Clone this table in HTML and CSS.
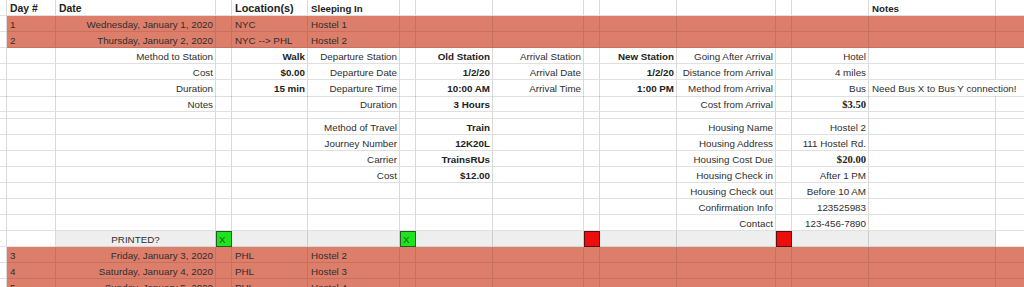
FILE: index.html
```html
<!DOCTYPE html>
<html lang="en">
<head>
<meta charset="utf-8">
<title>Trip itinerary</title>
<link rel="stylesheet" href="styles.css">
</head>
<body>
<div class="sheet">
  <div class="row hd">
    <div class="c"></div><div class="c">Day #</div><div class="c">Date</div><div class="c"></div><div class="c loc">Location(s)</div><div class="c sm">Sleeping In</div><div class="c"></div><div class="c"></div><div class="c"></div><div class="c"></div><div class="c"></div><div class="c"></div><div class="c"></div><div class="c"></div><div class="c sm">Notes</div><div class="c"></div>
  </div>
  <div class="row day">
    <div class="c a"></div><div class="c">1</div><div class="c r">Wednesday, January 1, 2020</div><div class="c"></div><div class="c">NYC</div><div class="c">Hostel 1</div><div class="c"></div><div class="c"></div><div class="c"></div><div class="c"></div><div class="c"></div><div class="c"></div><div class="c"></div><div class="c"></div><div class="c"></div><div class="c"></div>
  </div>
  <div class="row day">
    <div class="c a"></div><div class="c">2</div><div class="c r">Thursday, January 2, 2020</div><div class="c"></div><div class="c">NYC --&gt; PHL</div><div class="c">Hostel 2</div><div class="c"></div><div class="c"></div><div class="c"></div><div class="c"></div><div class="c"></div><div class="c"></div><div class="c"></div><div class="c"></div><div class="c"></div><div class="c"></div>
  </div>
  <div class="row">
    <div class="c"></div><div class="c"></div><div class="c r">Method to Station</div><div class="c"></div><div class="c r b">Walk</div><div class="c r">Departure Station</div><div class="c"></div><div class="c r b">Old Station</div><div class="c r">Arrival Station</div><div class="c"></div><div class="c r b">New Station</div><div class="c r">Going After Arrival</div><div class="c"></div><div class="c r">Hotel</div><div class="c"></div><div class="c"></div>
  </div>
  <div class="row">
    <div class="c"></div><div class="c"></div><div class="c r">Cost</div><div class="c"></div><div class="c r b">$0.00</div><div class="c r">Departure Date</div><div class="c"></div><div class="c r b">1/2/20</div><div class="c r">Arrival Date</div><div class="c"></div><div class="c r b">1/2/20</div><div class="c r">Distance from Arrival</div><div class="c"></div><div class="c r">4 miles</div><div class="c"></div><div class="c"></div>
  </div>
  <div class="row">
    <div class="c"></div><div class="c"></div><div class="c r">Duration</div><div class="c"></div><div class="c r b">15 min</div><div class="c r">Departure Time</div><div class="c"></div><div class="c r b">10:00 AM</div><div class="c r">Arrival Time</div><div class="c"></div><div class="c r b">1:00 PM</div><div class="c r">Method from Arrival</div><div class="c"></div><div class="c r">Bus</div><div class="c spill">Need Bus X to Bus Y connection!</div><div class="c"></div>
  </div>
  <div class="row">
    <div class="c"></div><div class="c"></div><div class="c r">Notes</div><div class="c"></div><div class="c"></div><div class="c r">Duration</div><div class="c"></div><div class="c r b">3 Hours</div><div class="c"></div><div class="c"></div><div class="c"></div><div class="c r">Cost from Arrival</div><div class="c"></div><div class="c r b serif">$3.50</div><div class="c"></div><div class="c"></div>
  </div>
  <div class="row gap">
    <div class="c"></div><div class="c"></div><div class="c"></div><div class="c"></div><div class="c"></div><div class="c"></div><div class="c"></div><div class="c"></div><div class="c"></div><div class="c"></div><div class="c"></div><div class="c"></div><div class="c"></div><div class="c"></div><div class="c"></div><div class="c"></div>
  </div>
  <div class="row">
    <div class="c"></div><div class="c"></div><div class="c"></div><div class="c"></div><div class="c"></div><div class="c r">Method of Travel</div><div class="c"></div><div class="c r b">Train</div><div class="c"></div><div class="c"></div><div class="c"></div><div class="c r">Housing Name</div><div class="c"></div><div class="c r">Hostel 2</div><div class="c"></div><div class="c"></div>
  </div>
  <div class="row">
    <div class="c"></div><div class="c"></div><div class="c"></div><div class="c"></div><div class="c"></div><div class="c r">Journey Number</div><div class="c"></div><div class="c r b">12K20L</div><div class="c"></div><div class="c"></div><div class="c"></div><div class="c r">Housing Address</div><div class="c"></div><div class="c r">111 Hostel Rd.</div><div class="c"></div><div class="c"></div>
  </div>
  <div class="row">
    <div class="c"></div><div class="c"></div><div class="c"></div><div class="c"></div><div class="c"></div><div class="c r">Carrier</div><div class="c"></div><div class="c r b">TrainsRUs</div><div class="c"></div><div class="c"></div><div class="c"></div><div class="c r">Housing Cost Due</div><div class="c"></div><div class="c r b serif">$20.00</div><div class="c"></div><div class="c"></div>
  </div>
  <div class="row">
    <div class="c"></div><div class="c"></div><div class="c"></div><div class="c"></div><div class="c"></div><div class="c r">Cost</div><div class="c"></div><div class="c r b">$12.00</div><div class="c"></div><div class="c"></div><div class="c"></div><div class="c r">Housing Check in</div><div class="c"></div><div class="c r">After 1 PM</div><div class="c"></div><div class="c"></div>
  </div>
  <div class="row">
    <div class="c"></div><div class="c"></div><div class="c"></div><div class="c"></div><div class="c"></div><div class="c"></div><div class="c"></div><div class="c"></div><div class="c"></div><div class="c"></div><div class="c"></div><div class="c r">Housing Check out</div><div class="c"></div><div class="c r">Before 10 AM</div><div class="c"></div><div class="c"></div>
  </div>
  <div class="row">
    <div class="c"></div><div class="c"></div><div class="c"></div><div class="c"></div><div class="c"></div><div class="c"></div><div class="c"></div><div class="c"></div><div class="c"></div><div class="c"></div><div class="c"></div><div class="c r">Confirmation Info</div><div class="c"></div><div class="c r">123525983</div><div class="c"></div><div class="c"></div>
  </div>
  <div class="row">
    <div class="c"></div><div class="c"></div><div class="c"></div><div class="c"></div><div class="c"></div><div class="c"></div><div class="c"></div><div class="c"></div><div class="c"></div><div class="c"></div><div class="c"></div><div class="c r">Contact</div><div class="c"></div><div class="c r">123-456-7890</div><div class="c"></div><div class="c"></div>
  </div>
  <div class="row printed">
    <div class="c"></div><div class="c"></div><div class="c g ctr">PRINTED?</div><div class="c ok">X</div><div class="c g"></div><div class="c g"></div><div class="c ok">X</div><div class="c g"></div><div class="c g"></div><div class="c no"></div><div class="c g"></div><div class="c g"></div><div class="c no"></div><div class="c g"></div><div class="c g"></div><div class="c"></div>
  </div>
  <div class="row day">
    <div class="c a"></div><div class="c">3</div><div class="c r">Friday, January 3, 2020</div><div class="c"></div><div class="c">PHL</div><div class="c">Hostel 2</div><div class="c"></div><div class="c"></div><div class="c"></div><div class="c"></div><div class="c"></div><div class="c"></div><div class="c"></div><div class="c"></div><div class="c"></div><div class="c"></div>
  </div>
  <div class="row day">
    <div class="c a"></div><div class="c">4</div><div class="c r">Saturday, January 4, 2020</div><div class="c"></div><div class="c">PHL</div><div class="c">Hostel 3</div><div class="c"></div><div class="c"></div><div class="c"></div><div class="c"></div><div class="c"></div><div class="c"></div><div class="c"></div><div class="c"></div><div class="c"></div><div class="c"></div>
  </div>
  <div class="row day">
    <div class="c a"></div><div class="c">5</div><div class="c r">Sunday, January 5, 2020</div><div class="c"></div><div class="c">PHL</div><div class="c">Hostel 4</div><div class="c"></div><div class="c"></div><div class="c"></div><div class="c"></div><div class="c"></div><div class="c"></div><div class="c"></div><div class="c"></div><div class="c"></div><div class="c"></div>
  </div>
</div>
</body>
</html>
```

FILE: styles.css
```css
html, body {
  margin: 0;
  padding: 0;
  background: #fff;
  overflow: hidden;
}

.sheet {
  width: 1100px;
  font-family: "Liberation Sans", Arial, sans-serif;
  font-size: 9.8px;
  color: #2e2e2e;
}

.row {
  display: grid;
  grid-template-columns: 7px 49px 160px 16px 76px 92px 16px 77px 91px 16px 77px 99px 16px 77px 127px 104px;
  height: 16px;
}

.row.gap {
  height: 7px;
}

.c {
  box-sizing: border-box;
  border-right: 1px solid rgba(0, 0, 0, 0.14);
  border-bottom: 1px solid rgba(0, 0, 0, 0.12);
  padding: 1px 3px 0 3px;
  line-height: 15px;
  white-space: nowrap;
  overflow: hidden;
}

.r {
  text-align: right;
  padding-right: 2px;
}

.ctr {
  text-align: center;
}

.b {
  font-weight: bold;
  color: #222;
}

.serif {
  font-family: "Liberation Serif", "Times New Roman", serif;
  font-size: 10.6px;
}

.hd .c {
  font-weight: bold;
  font-size: 10.4px;
  color: #222;
}

.hd .loc {
  font-size: 10.9px;
}

.hd .sm {
  font-size: 9.7px;
}

.spill {
  overflow: visible;
  border-right-color: transparent;
  padding-left: 3px;
}

.day {
  background: #dd7e6b;
}

.day .c {
  border-right-color: rgba(0, 0, 0, 0.1);
  border-bottom-color: rgba(0, 0, 0, 0.1);
}

.day .a {
  background: #fff;
  border-right-color: rgba(0, 0, 0, 0.14);
  border-bottom-color: rgba(0, 0, 0, 0.12);
}

.printed .g {
  background: #eeeeee;
}

.printed .c {
  border-bottom-color: rgba(0, 0, 0, 0.1);
}

.ok {
  background: #1ee41e;
  outline: 1px solid #245a24;
  outline-offset: -1px;
  color: #1d5c1d;
  padding-left: 3px;
}

.no {
  background: #ec0d0d;
  outline: 1px solid #5a1010;
  outline-offset: -1px;
}
```
